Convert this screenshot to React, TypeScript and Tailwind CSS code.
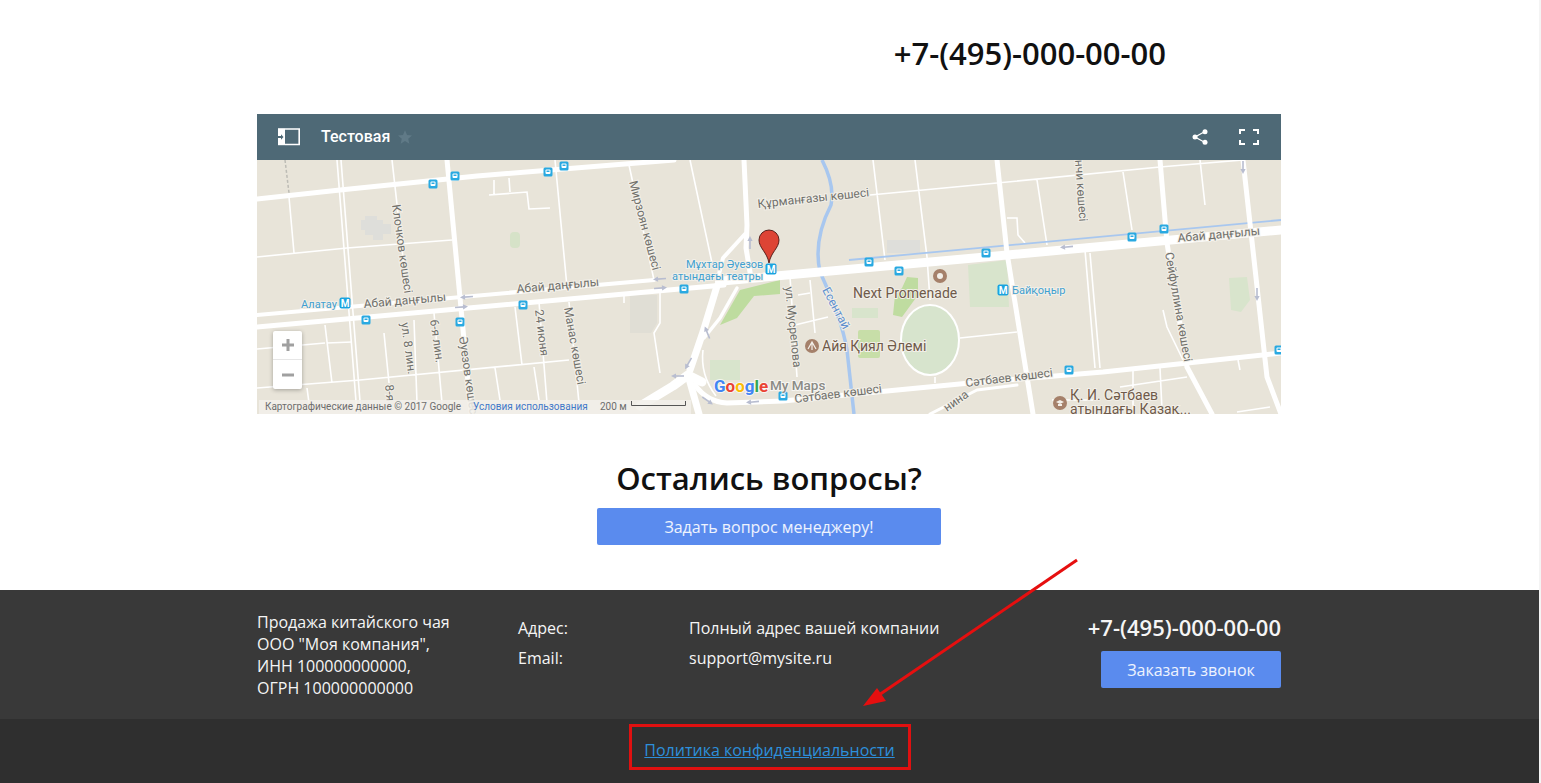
const Road = ({ d, w = 5 }: { d: string; w?: number }) => (
  <path d={d} fill="none" stroke="#fff" strokeWidth={w} strokeLinecap="round" strokeLinejoin="round" />
)

const Bus = ({ x, y }: { x: number; y: number }) => (
  <g transform={`translate(${x} ${y})`}>
    <rect x="-4.5" y="-4.5" width="9" height="9" rx="1.5" fill="#29a9e1" />
    <rect x="-2.5" y="-2.5" width="5" height="4.500" rx="1" fill="#fff" />
    <rect x="-1.500" y="-1.500" width="3" height="1.500" fill="#29a9e1" />
  </g>
)

const Metro = ({ x, y }: { x: number; y: number }) => (
  <g transform={`translate(${x} ${y})`}>
    <rect x="-5.5" y="-5.5" width="11" height="11" rx="2" fill="#1aa3df" />
    <text x="0" y="3.7" textAnchor="middle" fontSize="10" fontWeight="700" fill="#fff">M</text>
  </g>
)

const Arrow = ({ x, y, r = 0 }: { x: number; y: number; r?: number }) => (
  <g transform={`translate(${x} ${y}) rotate(${r})`} fill="#b8bdd0">
    <rect x="-2" y="-0.8" width="9" height="1.6" />
    <path d="M-6 0 L-1 -2.600 L-1 2.600 Z" />
  </g>
)

const Label = ({ x, y, r = 0, size = 12, fill = '#70706b', children }: { x: number; y: number; r?: number; size?: number; fill?: string; children: string }) => (
  <text x={x} y={y} fontSize={size} fill={fill} transform={r ? `rotate(${r} ${x} ${y})` : undefined} stroke="#f2efe8" strokeWidth="2" paintOrder="stroke">
    {children}
  </text>
)

const MapView = () => (
  <svg width="1024" height="254" viewBox="0 0 1024 254" className="block" fontFamily="Roboto, sans-serif">
    <rect width="1024" height="254" fill="#e8e4d9" />
    {/* parks and blocks */}
    <path d="M463 165 L483 130 L523 120 L523 134 L497 136 L480 158 Z" fill="#bedc9f" />
    <rect x="453" y="200" width="30" height="20" fill="#d8e4cc" />
    <rect x="253" y="72" width="10" height="16" rx="4" fill="#d6e2c8" />
    <path d="M711 105 L750 100 L752 147 L713 147 Z" fill="#d8e4cc" />
    <path d="M650 117 L661 118 L661 135 L645 157 L636 155 L638 135 L645 128 Z" fill="#bfdca0" />
    <rect x="595" y="148" width="26" height="10" fill="#d8e4cc" />
    <rect x="601" y="170" width="22" height="28" rx="2" fill="#c7dea8" />
    <path d="M972 118 L990 117 L993 140 L984 152 L974 150 Z" fill="#d8e4cc" />
    <rect x="630" y="80" width="33" height="13" fill="#dededa" />
    <path d="M373 135 h27 v28 l-6 10 h-21 z" fill="#e0ded5" />
    <path d="M108 56 h12 v4 h6 v4 h8 v10 h-8 v6 h-10 v-5 h-8 v-5 h-4 v-10 h4 z" fill="#dededa" />
    <ellipse cx="673" cy="180" rx="29" ry="35" fill="#d7e4cd" stroke="#fff" strokeWidth="2" />

    {/* thin streets */}
    <g stroke="#fff" strokeWidth="1.6" fill="none">
      <path d="M32 37 L37 93 M0 97 L90 88 L195 80 M135 0 L150 133 M298 0 L310 127 M372 5 L397 120 M433 0 L455 103 M367 135 V143" />
      <path d="M68 165 L75 223 M70 183 L95 182 M0 189 L68 183 M0 228 L103 220 L312 200 M127 173 L132 223 M157 160 L160 243 M177 153 L185 243 M258 147 L265 205 M282 142 L290 243 M312 142 L322 243 M238 208 L243 240 M277 207 L282 240 M50 228 L52 243" />
      <path d="M403 130 L403 163 L397 173 L403 213 M232 35 L270 32 L272 49 L293 48 M237 20 L237 35 M252 18 L253 32" />
      <path d="M616 0 L628 100 M658 0 L670 97 L673 140 M613 35 L740 23 L903 7 L986 0 M780 20 L790 85 M866 12 L875 70 M943 0 L948 45" />
      <path d="M828 90 L838 208 M833 93 L843 208 M750 58 L760 58 L761 75 L768 83 M703 178 L760 172" />
      <path d="M533 117 L540 217 M553 120 L558 173 M541 135 L553 133 M538 165 L571 157 M678 217 L678 223" />
      <path d="M876 210 L876 250 M903 208 L905 250 M795 240 L836 240 M863 227 L930 217 M906 150 L910 167 L926 200 M980 252 L1013 247 M981 200 L983 210" />
      <path d="M446 190 Q443 215 459 236" />
    </g>
    <path d="M28 0 L32 33" stroke="#bdbcb5" strokeWidth="1.500" strokeDasharray="3 2" fill="none" />

    {/* river and rail */}
    <path d="M565 0 Q578 25 574 45 Q556 80 563 112 Q585 160 590 190 L597 254" fill="none" stroke="#a8c7ef" strokeWidth="3.500" />
    <path d="M592 100 L1024 60" fill="none" stroke="#a8c7ef" strokeWidth="1.800" />

    {/* main roads */}
    <Road d="M0 39 L83 30 L220 16 L417 0" w={5} />
    <Road d="M84 0 L104 254" w={1.6} />
    <Road d="M80 0 L100 254" w={1.6} />
    <Road d="M190 0 L214 254" w={5} />
    <Road d="M0 155 L397 120" w={4} />
    <Road d="M0 167 L467 125" w={5} />
    <Road d="M465 121 L1024 70" w={9} />
    <Road d="M487 0 L490 65 L489 88 L494 118" w={5} />
    <Road d="M488 74 L466 98 L460 122" w={4} />
    <Road d="M460 126 L446 172 L433 210" w={7} />
    <Road d="M480 128 L463 158 L447 178" w={3.5} />
    <Road d="M383 246 L416 226 L431 215 L445 222" w={9} />
    <Road d="M431 215 L442 254" w={7} />
    <Road d="M438 225 Q450 242 470 243 L526 241 L713 223 L846 212 L1024 193" w={5} />
    <Road d="M740 0 L750 93 L776 254" w={5} />
    <Road d="M903 0 L910 83 L930 207 L955 254" w={5} />
    <Road d="M986 0 L1010 217 L1024 254" w={5} />
    <Road d="M673 254 L720 230 L760 225" w={3} />

    {/* road arrows */}
    <Arrow x={209} y={137} r={-4} />
    <Arrow x={205} y={147} r={176} />
    <Arrow x={402} y={119} r={-4} />
    <Arrow x={404} y={128} r={176} />
    <Arrow x={493} y={82} r={90} />
    <Arrow x={450} y={172} r={68} />
    <Arrow x={431} y={204} r={-60} />
    <Arrow x={420} y={216} />
    <Arrow x={451} y={241} r={215} />
    <Arrow x={495} y={242} r={-5} />
    <Arrow x={809} y={87} r={-5} />
    <Arrow x={986} y={8} r={-90} />
    <Arrow x={1000} y={135} r={-90} />

    {/* street names */}
    <Label x={135} y={45} r={82}>Клочков көшесі</Label>
    <Label x={372} y={22} r={75}>Мирзоян көшесі</Label>
    <Label x={107} y={148} r={-5}>Абай даңғылы</Label>
    <Label x={260} y={133} r={-5}>Абай даңғылы</Label>
    <Label x={921} y={82} r={-5}>Абай даңғылы</Label>
    <Label x={501} y={48} r={-6}>Құрманғазы көшесі</Label>
    <Label x={144} y={163} r={82}>ул. 8 лин.</Label>
    <Label x={173} y={160} r={82}>6-я лин.</Label>
    <Label x={128} y={225} r={84}>8-я</Label>
    <Label x={202} y={177} r={82}>Әуезов көшесі</Label>
    <Label x={278} y={150} r={83}>24 июня</Label>
    <Label x={307} y={148} r={80}>Манас көшесі</Label>
    <Label x={528} y={127} r={84}>ул. Мусрепова</Label>
    <Label x={565} y={130} r={62} fill="#5e8fcf">Есентай</Label>
    <Label x={538} y={243} r={-7}>Сәтбаев көшесі</Label>
    <Label x={709} y={227} r={-7}>Сәтбаев көшесі</Label>
    <Label x={908} y={93} r={80}>Сейфуллина көшесі</Label>
    <Label x={818} y={0} r={86}>нчи көшесі</Label>
    <Label x={690} y={252} r={-35}>нина</Label>

    {/* places */}
    <Label x={44} y={148} size={11} fill="#3f9fd0">Алатау</Label>
    <Metro x={88} y={143} />
    <Label x={429} y={108} size={11} fill="#3f9fd0">Мұхтар Әуезов</Label>
    <Label x={415} y={120} size={11} fill="#3f9fd0">атындағы театры</Label>
    <Metro x={746} y={130} />
    <Label x={755} y={134} size={11} fill="#3f9fd0">Байқоңыр</Label>
    <Label x={596} y={138} size={14} fill="#6f5a4a">Next Promenade</Label>
    <circle cx="683" cy="116" r="7" fill="#a5806a" />
    <circle cx="683" cy="116" r="3" fill="#f3efe9" />
    <circle cx="555" cy="186" r="7" fill="#a5806a" />
    <path d="M551 189 L555 182 L559 189 M555 183 V190" stroke="#f3efe9" strokeWidth="1.200" fill="none" />
    <Label x={565} y={191} size={14} fill="#6f5a4a">Айя Қиял Әлемі</Label>
    <circle cx="803" cy="243" r="7" fill="#a5806a" />
    <path d="M799 242 L803 240 L807 242 L803 244 Z M801 244 V246 H805 V244" fill="#f3efe9" />
    <Label x={813} y={240} size={14} fill="#6f5a4a">Қ. И. Сәтбаев</Label>
    <Label x={813} y={254} size={14} fill="#6f5a4a">атындағы Қазақ...</Label>

    {/* transit stops */}
    <Bus x={176} y={24} /><Bus x={198} y={16} /><Bus x={291} y={12} /><Bus x={307} y={6} />
    <Bus x={109} y={160} /><Bus x={203} y={162} /><Bus x={266} y={145} /><Bus x={427} y={129} />
    <Bus x={612} y={102} /><Bus x={642} y={111} /><Bus x={729} y={93} /><Bus x={875} y={77} />
    <Bus x={907} y={69} /><Bus x={812} y={210} /><Bus x={526} y={236} /><Bus x={1022} y={190} />

    {/* marker */}
    <Metro x={514} y={109} />
    <path d="M512 103 C510 92 502 88 502 80 A10 10 0 0 1 522 80 C522 88 514 92 512 103 Z" fill="#dd4435" stroke="#4a1410" strokeWidth="0.900" />

    {/* attribution strip */}
    <rect x="2" y="240" width="432" height="14" fill="#f2f0ea" opacity="0.85" />
    <text x="8" y="250" fontSize="10" fill="#6d6d6d">Картографические данные © 2017 Google</text>
    <text x="216" y="250" fontSize="10" fill="#3f78c8">Условия использования</text>
    <text x="343" y="250" fontSize="10" fill="#6d6d6d">200 м</text>
    <path d="M374.500 241 v4.500 h54 v-4.500" fill="none" stroke="#555" strokeWidth="1" />

    {/* logo words */}
    <g stroke="#fff" strokeOpacity="0.7" strokeWidth="2" paintOrder="stroke">
      <text x="457" y="232" fontSize="17" fontWeight="700">
        <tspan fill="#4285f4">G</tspan><tspan fill="#ea4335">o</tspan><tspan fill="#fbbc05">o</tspan><tspan fill="#4285f4">g</tspan><tspan fill="#34a853">l</tspan><tspan fill="#ea4335">e</tspan>
      </text>
      <text x="513" y="230" fontSize="13.500" fill="#8b8b86" fontWeight="500">My Maps</text>
    </g>
  </svg>
)

const ZoomControls = () => (
  <div className="absolute left-[16px] top-[217px] w-[29px] flex flex-col bg-white rounded-[2px] shadow-[0_1px_4px_rgba(0,0,0,0.3)]">
    <div className="h-[29px] flex items-center justify-center border-b border-[#e6e6e6]">
      <svg width="12" height="12" viewBox="0 0 12 12"><path d="M0 6h12M6 0v12" stroke="#a0a0a0" strokeWidth="3" /></svg>
    </div>
    <div className="h-[29px] flex items-center justify-center">
      <svg width="12" height="12" viewBox="0 0 12 12"><path d="M0 6h12" stroke="#a0a0a0" strokeWidth="3" /></svg>
    </div>
  </div>
)

const MapEmbed = () => (
  <div className="relative w-[1024px] h-[300px] overflow-hidden">
    <div className="h-[46px] bg-[#4e6976] flex items-center pl-[20px] pr-[22px] text-white">
      <svg width="23" height="18" viewBox="0 0 23 18">
        <path d="M8 1H22.200V16.500H8" fill="none" stroke="#fff" strokeWidth="1.600" />
        <rect x="1" y="0.200" width="7" height="17" fill="#fff" />
        <path d="M1 8h3V6.200L6.500 9 4 11.800V10H1z" fill="#4e6976" />
      </svg>
      <span className="ml-[21px] text-[16px] font-medium font-['Roboto',sans-serif]">Тестовая</span>
      <svg className="ml-[7px]" width="16" height="16" viewBox="0 0 24 24"><path d="M12 2l3 7 7.500.6-5.700 5 1.700 7.400L12 18l-6.500 4 1.700-7.400-5.700-5L9 9z" fill="#607a87" /></svg>
      <svg className="ml-auto" width="16" height="16" viewBox="0 0 16 16">
        <path d="M13 2.500L3 8l10 5.500" fill="none" stroke="#fff" strokeWidth="1.300" />
        <circle cx="13" cy="2.800" r="2.500" fill="#fff" /><circle cx="3" cy="8" r="2.500" fill="#fff" /><circle cx="13" cy="13.200" r="2.500" fill="#fff" />
      </svg>
      <svg className="ml-[31px]" width="20" height="16" viewBox="0 0 20 16">
        <path d="M1 5V1h5M14 1h5v4M19 11v4h-5M6 15H1v-4" fill="none" stroke="#fff" strokeWidth="2" />
      </svg>
    </div>
    <MapView />
    <ZoomControls />
  </div>
)

export default function App() {
  return (
    <div className="relative w-[1541px] h-[783px] overflow-hidden flex bg-[#f4f4f4] font-['Open_Sans',sans-serif]">
      <div className="w-[1539px] h-full flex flex-col bg-white">
        <div className="w-[1024px] ml-[257px] flex-1">
          <div className="h-[114px] pt-[33px] pr-[115px] text-right text-[31px] leading-[41px] font-semibold text-[#111]">+7-(495)-000-00-00</div>
          <MapEmbed />
          <h2 className="mt-[44px] text-center text-[31px] leading-[41px] font-semibold text-[#111]">Остались вопросы?</h2>
          <div className="mt-[9px] flex justify-center">
            <button className="w-[344px] h-[37px] rounded-[2px] bg-[#5a8bee] text-white/90 text-[16px]">Задать вопрос менеджеру!</button>
          </div>
        </div>
        <footer className="bg-[#393939] text-[#f5f5f5] text-[16px]">
          <div className="w-[1024px] h-[129px] ml-[257px] flex pt-[21px]">
            <div className="w-[261px] leading-[22px]">
              <p>Продажа китайского чая</p>
              <p>ООО "Моя компания",</p>
              <p>ИНН 100000000000,</p>
              <p>ОГРН 100000000000</p>
            </div>
            <div className="w-[171px] pt-[2px] leading-[30px]">
              <p>Адрес:</p>
              <p>Email:</p>
            </div>
            <div className="flex-1 pt-[2px] leading-[30px]">
              <p>Полный адрес вашей компании</p>
              <p>support@mysite.ru</p>
            </div>
            <div className="flex flex-col items-end">
              <p className="text-[22px] leading-[32px] font-semibold">+7-(495)-000-00-00</p>
              <button className="mt-[8px] w-[180px] h-[37px] rounded-[2px] bg-[#5a8bee] text-white/90 text-[16px]">Заказать звонок</button>
            </div>
          </div>
          <div className="h-[64px] bg-[#2f2f2f] flex items-center justify-center pb-[2px]">
            <a href="#" className="text-[16px] text-[#2d8fdb] underline">Политика конфиденциальности</a>
          </div>
        </footer>
      </div>
      {/* annotation drawn over the page */}
      <div className="absolute left-[629px] top-[724px] w-[282px] h-[46px] border-[3px] border-[#e01010]" />
      <svg className="absolute left-[850px] top-[550px]" width="240" height="170" viewBox="0 0 240 170">
        <path d="M227 10 L26 147" stroke="#e60f0f" strokeWidth="3" fill="none" />
        <path d="M13 156 L27 138 L36 151 Z" fill="#e60f0f" />
      </svg>
    </div>
  )
}
